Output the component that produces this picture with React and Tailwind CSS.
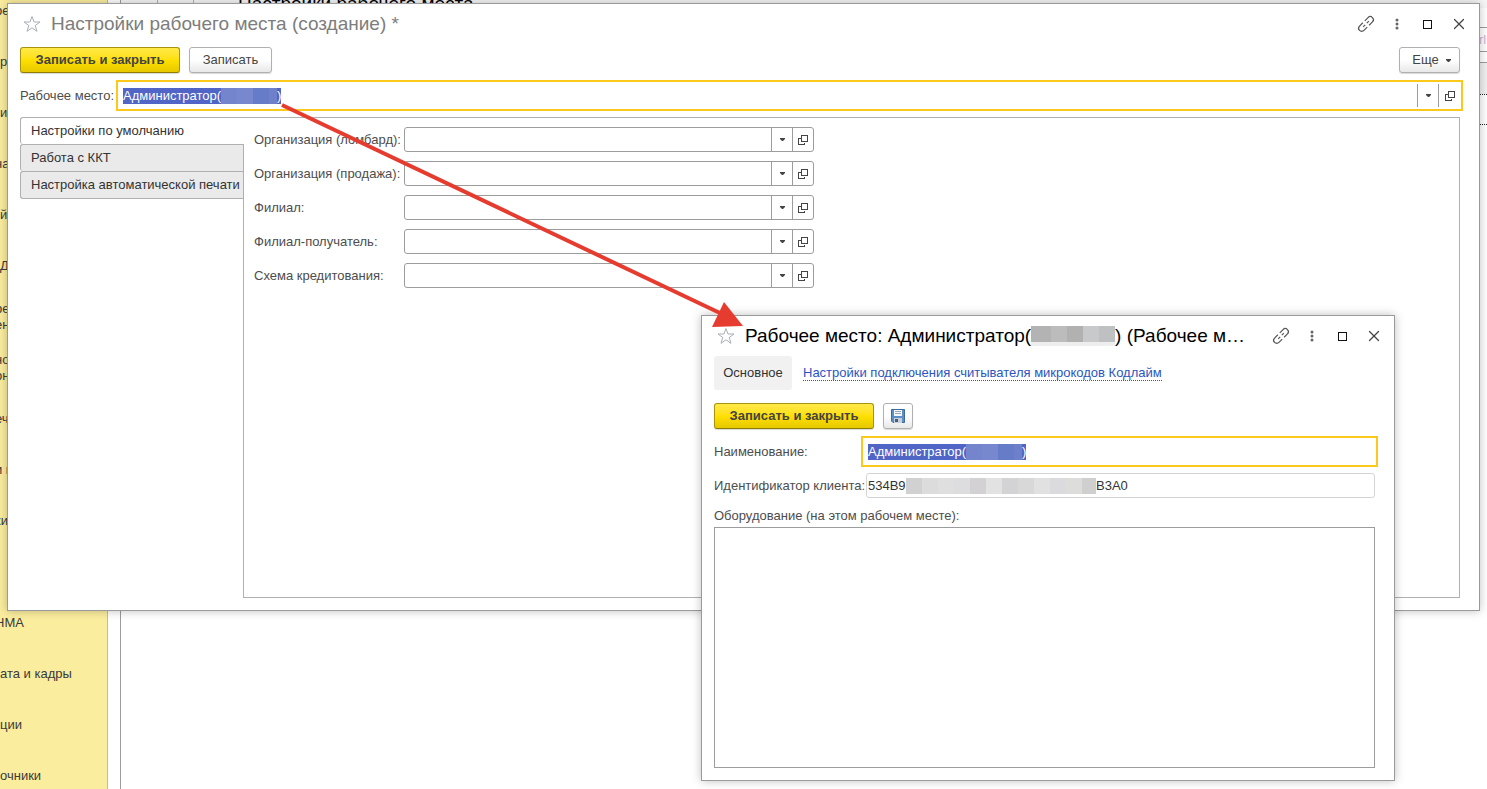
import { X } from "lucide-react";

const sections = [
  { lines: ["ре"], cut: true },
  { lines: ["р"] },
  { lines: ["и"] },
  { lines: ["на"], cut: true },
  { lines: ["й"] },
  { lines: ["Д"] },
  { lines: ["ре", "ен"], cut: true },
  { lines: ["но", "он"], cut: true },
  { lines: ["еч"], cut: true },
  { lines: ["и н"], cut: true },
  { lines: ["ки"], cut: true },
  { lines: [] },
  { lines: ["НМА"], cut: true },
  { lines: ["ата и кадры"] },
  { lines: ["ции"] },
  { lines: ["очники"] },
];

const defaults = [
  { id: "org-pawn", label: "Организация (ломбард):" },
  { id: "org-sale", label: "Организация (продажа):" },
  { id: "branch", label: "Филиал:" },
  { id: "branch-to", label: "Филиал-получатель:" },
  { id: "scheme", label: "Схема кредитования:" },
];

function StarIcon() {
  return (
    <svg width="18" height="18" viewBox="0 0 18 18" fill="none" stroke="#a9afb8" aria-hidden="true">
      <path d="M9 1.5 11 7H17L12.2 10.5 14 16.3 9 12.8 4 16.3 5.8 10.5 1 7H7Z" />
    </svg>
  );
}

function LinkIcon() {
  return (
    <svg width="20" height="20" viewBox="0 0 20 20" fill="none" stroke="#555" strokeWidth="1.2" aria-hidden="true">
      <g transform="rotate(-45 10 10)">
        <path d="M8.6 13.1H4a3.1 3.1 0 0 1 0-6.2h4.6M11.4 6.9H16a3.1 3.1 0 0 1 0 6.2h-4.6M6 10h2.8M11.2 10H14" />
      </g>
    </svg>
  );
}

function DotsIcon() {
  return (
    <svg width="4" height="12" viewBox="0 0 4 12" fill="#666" aria-hidden="true">
      <circle cx="2" cy="2" r="1.5" />
      <circle cx="2" cy="6" r="1.5" />
      <circle cx="2" cy="10" r="1.5" />
    </svg>
  );
}

function Caret() {
  return (
    <svg width="5" height="3" viewBox="0 0 5 3" fill="#444" aria-hidden="true">
      <path d="M0 0H5V1L3 3H2L0 1Z" />
    </svg>
  );
}

function OpenIcon() {
  return (
    <svg width="10" height="10" viewBox="0 0 10 10" fill="none" stroke="#444" shapeRendering="crispEdges" aria-hidden="true">
      <rect x="3.5" y="0.5" width="6" height="6" />
      <path d="M3 3.5H0.5V9.5H6.5V8" />
    </svg>
  );
}

function SaveIcon() {
  return (
    <svg width="14" height="14" viewBox="0 0 14 14" aria-hidden="true">
      <path d="M0.5 0.5H13.5V13.5H2L0.5 12Z" fill="#5b8fc7" stroke="#3d6a9c" />
      <rect x="3" y="1" width="8" height="6" fill="#f5f8fb" />
      <path d="M4 2.5H10M4 4.5H10" stroke="#9aa7b5" />
      <rect x="3" y="9" width="8" height="5" fill="#c9d0d8" />
      <rect x="4" y="10" width="3" height="3" fill="#41607f" />
    </svg>
  );
}

function TitleBar({ children }) {
  return (
    <header className="-mr-[14px] flex h-10 items-center pl-[3px]">
      <button type="button" aria-label="В избранное"><StarIcon /></button>
      {children}
      <div className="ml-auto flex">
        <button type="button" aria-label="Ссылка" className="flex w-[31px] items-center justify-center"><LinkIcon /></button>
        <button type="button" aria-label="Меню" className="flex w-[31px] items-center justify-center"><DotsIcon /></button>
        <button type="button" aria-label="Развернуть" className="flex w-[31px] items-center justify-center">
          <span className="size-[9px] border border-[#111]" />
        </button>
        <button type="button" aria-label="Закрыть" className="flex w-[31px] items-center justify-center">
          <X size={18} strokeWidth={1.6} color="#444" />
        </button>
      </div>
    </header>
  );
}

function PrimaryButton({ children }) {
  return (
    <button type="button" className="h-[26px] w-40 rounded-[3px] border border-[#a8940c] border-b-[#8f7d00] bg-linear-to-b from-[#ffe945] via-[#ffe000] to-[#e6c800] font-bold text-[#444] shadow-[0_1px_1px_rgba(0,0,0,0.15)]">
      {children}
    </button>
  );
}

const plainButton = "flex h-[26px] items-center justify-center rounded-[3px] border border-[#b0b0b0] bg-linear-to-b from-white via-white to-[#e8e8e8] text-[#444] shadow-[0_1px_1px_rgba(0,0,0,0.15)]";

function SelectedText({ id }) {
  return (
    <div className="flex h-4 items-center bg-[#5065c5] leading-4 text-white">
      <input id={id} defaultValue="Администратор(" className="h-4 w-[98px] outline-none" />
      <span className="flex h-4">
        <i className="w-4 bg-[#7485cd]" />
        <i className="w-4 bg-[#7888cf]" />
        <i className="w-4 bg-[#677cc9]" />
        <i className="w-2 bg-[#6f80cb]" />
      </span>
      <span>)</span>
    </div>
  );
}

function PickerField({ id, label }) {
  return (
    <div className="flex items-center">
      <label htmlFor={id} className="w-[150px] text-[#4d4d4d]">{label}</label>
      <div className="flex h-[25px] w-[410px] rounded-[3px] border border-[#9c9c9c] bg-white">
        <input id={id} className="min-w-0 flex-1 px-1 outline-none" />
        <button type="button" aria-label="Выбрать" className="flex w-[21px] items-center justify-center border-l border-[#9c9c9c]"><Caret /></button>
        <button type="button" aria-label="Открыть" className="flex w-[21px] items-center justify-center border-l border-[#9c9c9c]"><OpenIcon /></button>
      </div>
    </div>
  );
}

function Backdrop() {
  return (
    <div className="flex h-full">
      <nav className="w-[108px] shrink-0 overflow-hidden border-r border-[#c9bf80] bg-[#fbed9e] text-[#3a3a3a]">
        <ul className="-mt-[15px]">
          {sections.map((s, i) => (
            <li key={i} className="flex h-[51px] items-center">
              <a href="#" className={s.cut ? "-ml-[5px] leading-4 whitespace-nowrap" : "leading-4 whitespace-nowrap"}>
                {s.lines.map((line) => <span key={line} className="block">{line}</span>)}
              </a>
            </li>
          ))}
        </ul>
      </nav>
      <main className="ml-3 min-w-0 flex-1 overflow-hidden border-l border-[#9c9c9c]">
        <div className="flex h-2 items-center bg-[#f6f6f6]">
          <span className="h-2 w-[37px] border-r border-[#b0b0b0]" />
          <span className="h-2 w-9 border-r border-[#b0b0b0]" />
          <h1 className="ml-11 text-[19px] text-black">Настройки рабочего места</h1>
        </div>
        <div className="mt-[19px] flex justify-end">
          <input aria-label="Поиск" placeholder="Поиск (Ctrl+F)" className="h-[25px] w-[74px] border-y border-l border-[#9c9c9c] pl-2 placeholder:text-[#c9b6d4]" />
        </div>
        <div className="mt-[10px] h-8 border-t border-[#9c9c9c] bg-[#f0f0f0]" />
        <div className="h-[31px] border-y border-dotted border-[#222]" />
      </main>
    </div>
  );
}

function SettingsWindow() {
  return (
    <section className="absolute top-[3px] right-[7px] left-[7px] border border-[#9a9a9a] bg-white pr-[19px] pb-3 pl-3 shadow-[0_0_9px_rgba(0,0,0,0.25)]">
      <TitleBar>
        <h2 className="ml-[10px] text-[19px] text-[#7d7d7d]">Настройки рабочего места (создание) *</h2>
      </TitleBar>
      <div className="mt-[3px] flex gap-[9px]">
        <PrimaryButton>Записать и закрыть</PrimaryButton>
        <button type="button" className={`${plainButton} w-[83px]`}>Записать</button>
        <button type="button" className={`${plainButton} ml-auto w-[61px] gap-[7px] pl-1`}>Еще <Caret /></button>
      </div>
      <div className="mt-[7px] flex items-center">
        <label htmlFor="workplace" className="w-24 shrink-0 text-[#4d4d4d]">Рабочее место:</label>
        <div className="-mr-[3px] flex h-[31px] flex-1 items-center border-2 border-[#fbc91b] pl-[5px]">
          <SelectedText id="workplace" />
          <button type="button" aria-label="Выбрать" className="ml-auto flex h-[23px] w-[21px] items-center justify-center border-l border-[#9c9c9c]"><Caret /></button>
          <button type="button" aria-label="Открыть" className="flex h-[23px] w-[23px] items-center justify-center border-l border-[#9c9c9c]"><OpenIcon /></button>
        </div>
      </div>
      <div className="mt-[6px] flex">
        <div role="tablist" className="flex w-[223px] shrink-0 flex-col text-[#333]">
          <button type="button" role="tab" aria-selected="true" className="relative z-10 -mr-px h-[27px] rounded-l-[3px] border-t border-l border-[#b0b0b0] bg-white pl-[10px] text-left">Настройки по умолчанию</button>
          <button type="button" role="tab" aria-selected="false" className="h-[27px] rounded-l-[3px] border-t border-l border-[#b0b0b0] bg-[#eaeaea] pl-[10px] text-left">Работа с ККТ</button>
          <button type="button" role="tab" aria-selected="false" className="h-7 rounded-l-[3px] border-y border-l border-[#b0b0b0] bg-[#eaeaea] pl-[10px] text-left whitespace-nowrap">Настройка автоматической печати</button>
        </div>
        <div role="tabpanel" className="flex min-h-[481px] flex-1 flex-col gap-[9px] border border-[#b0b0b0] pt-[9px] pl-[10px]">
          {defaults.map((f) => <PickerField key={f.id} id={f.id} label={f.label} />)}
        </div>
      </div>
    </section>
  );
}

function WorkplaceWindow() {
  return (
    <section className="absolute top-[315px] left-[701px] w-[694px] border border-[#9a9a9a] bg-white pr-[19px] pb-3 pl-3 shadow-[0_0_9px_rgba(0,0,0,0.25)]">
      <TitleBar>
        <h2 className="ml-[10px] flex items-center text-[19px] whitespace-nowrap text-black">
          Рабочее место: Администратор(
          <span className="flex h-5 border-b-4 border-[#eeeeee]">
            <i className="w-5 bg-[#b3b3b3]" />
            <i className="w-4 bg-[#bcbcbd]" />
            <i className="w-4 bg-[#b1b1b2]" />
            <i className="w-4 bg-[#c8c9cb]" />
            <i className="w-4 bg-[#bfc0c2]" />
          </span>
          ) (Рабочее м…
        </h2>
      </TitleBar>
      <nav className="flex items-center gap-[11px]">
        <a href="#" className="flex h-[34px] w-[78px] items-center justify-center rounded-[3px] bg-[#f1f1f1] text-[#333]">Основное</a>
        <a href="#" className="border-b border-dotted border-[#2a55c0] leading-[14px] text-[#2a55c0]">Настройки подключения считывателя микрокодов Кодлайм</a>
      </nav>
      <div className="mt-[13px] flex gap-[9px]">
        <PrimaryButton>Записать и закрыть</PrimaryButton>
        <button type="button" aria-label="Записать" className={`${plainButton} w-[30px]`}><SaveIcon /></button>
      </div>
      <div className="mt-[7px] flex items-center">
        <label htmlFor="name" className="w-[147px] text-[#4d4d4d]">Наименование:</label>
        <div className="-mr-[3px] flex h-[31px] flex-1 items-center border-2 border-[#fbc91b] pl-[5px]">
          <SelectedText id="name" />
        </div>
      </div>
      <div className="mt-[6px] flex items-center">
        <label htmlFor="client" className="w-[152px] shrink-0 whitespace-nowrap text-[#4d4d4d]">Идентификатор клиента:</label>
        <div className="flex h-[25px] flex-1 items-center rounded-[3px] border border-[#d4d4d4] pl-px text-[#333]">
          <input id="client" defaultValue="534B9" className="w-[38px] outline-none" />
          <span className="flex h-4">
            <i className="w-4 bg-[#d2d1d2]" />
            <i className="w-4 bg-[#dcdcdd]" />
            <i className="w-4 bg-[#e0dfe0]" />
            <i className="w-4 bg-[#dddddf]" />
            <i className="w-4 bg-[#d3d1d4]" />
            <i className="w-4 bg-[#e3e2e3]" />
            <i className="w-4 bg-[#d3d2d4]" />
            <i className="w-4 bg-[#d8d8d9]" />
            <i className="w-4 bg-[#e2e1e2]" />
            <i className="w-4 bg-[#dbdbdf]" />
            <i className="w-4 bg-[#dddddb]" />
            <i className="w-[14px] bg-[#cfcfcf]" />
          </span>
          <span>B3A0</span>
        </div>
      </div>
      <label htmlFor="equipment" className="block pt-[10px] pb-[3px] leading-4 text-[#4d4d4d]">Оборудование (на этом рабочем месте):</label>
      <textarea id="equipment" className="block h-[241px] w-full resize-none border border-[#9c9c9c] outline-none" />
    </section>
  );
}

export default function App() {
  return (
    <div className="relative h-screen overflow-hidden bg-white font-['Liberation_Sans',Arial,sans-serif] text-[13px]">
      <Backdrop />
      <SettingsWindow />
      <WorkplaceWindow />
      <svg width="470" height="230" viewBox="0 0 470 230" className="pointer-events-none absolute top-[100px] left-[277px]" aria-hidden="true">
        <path d="M5 5 445 214" stroke="#e63c2f" strokeWidth="4" />
        <path d="M447 202 466 226 435 227Z" fill="#e63c2f" />
      </svg>
    </div>
  );
}
